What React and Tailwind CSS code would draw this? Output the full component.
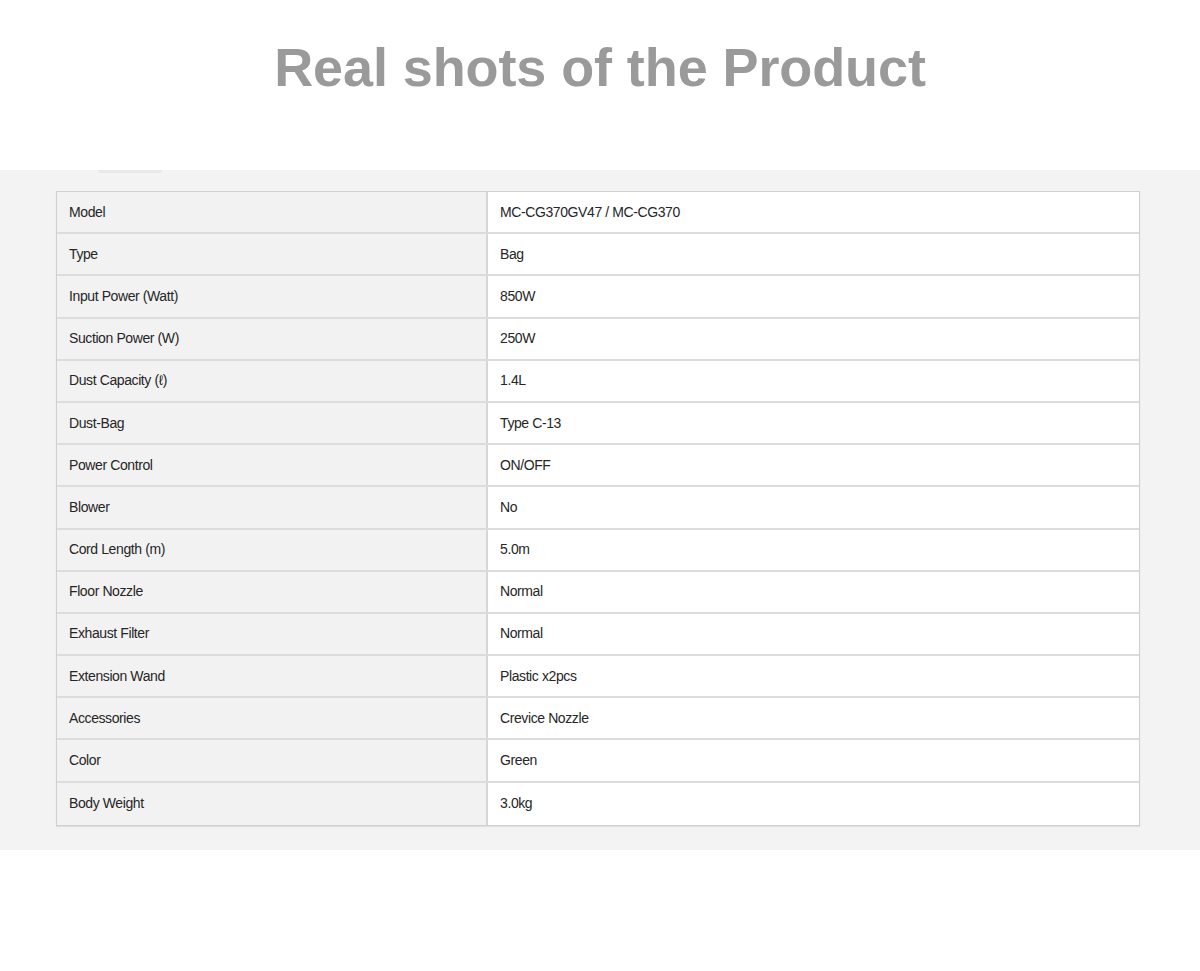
import React from "react";

const rows = [
  ["Model", "MC-CG370GV47 / MC-CG370"],
  ["Type", "Bag"],
  ["Input Power (Watt)", "850W"],
  ["Suction Power (W)", "250W"],
  ["Dust Capacity (ℓ)", "1.4L"],
  ["Dust-Bag", "Type C-13"],
  ["Power Control", "ON/OFF"],
  ["Blower", "No"],
  ["Cord Length (m)", "5.0m"],
  ["Floor Nozzle", "Normal"],
  ["Exhaust Filter", "Normal"],
  ["Extension Wand", "Plastic x2pcs"],
  ["Accessories", "Crevice Nozzle"],
  ["Color", "Green"],
  ["Body Weight", "3.0kg"],
];

export default function App() {
  return (
    <div className="w-[1200px] h-[971px] bg-white" style={{ fontFamily: '"Liberation Sans", Arial, sans-serif' }}>
      <div className="h-[170px] flex justify-center pt-[37px]">
        <h1 className="text-[54px] leading-[60px] font-bold text-[#9a9a9a] tracking-[-0.1px]">Real shots of the Product</h1>
      </div>
      <div className="h-[680px] bg-[#f3f3f3] pt-[21px] pl-[56px] pr-[60px] relative">
        <div className="absolute left-[98px] top-0 w-[64px] h-[3px] rounded-b-full bg-[#e9e9e9]" />
        <div className="border border-[#cfcfcf] shadow-[0_1px_1px_rgba(0,0,0,0.08)]">
          {rows.map(([k, v], i) => (
            <div key={k} className={`flex h-[42.2px] ${i < rows.length - 1 ? "border-b-2 border-[#dcdcdc]" : ""}`}>
              <div className="w-[431px] bg-[#f2f2f2] border-r-2 border-[#d6d6d6] flex items-center pl-[12px] text-[14px] tracking-[-0.4px] text-[#262626]">
                {k}
              </div>
              <div className="flex-1 bg-white flex items-center pl-[12px] text-[14px] tracking-[-0.4px] text-[#262626]">{v}</div>
            </div>
          ))}
        </div>
      </div>
    </div>
  );
}
